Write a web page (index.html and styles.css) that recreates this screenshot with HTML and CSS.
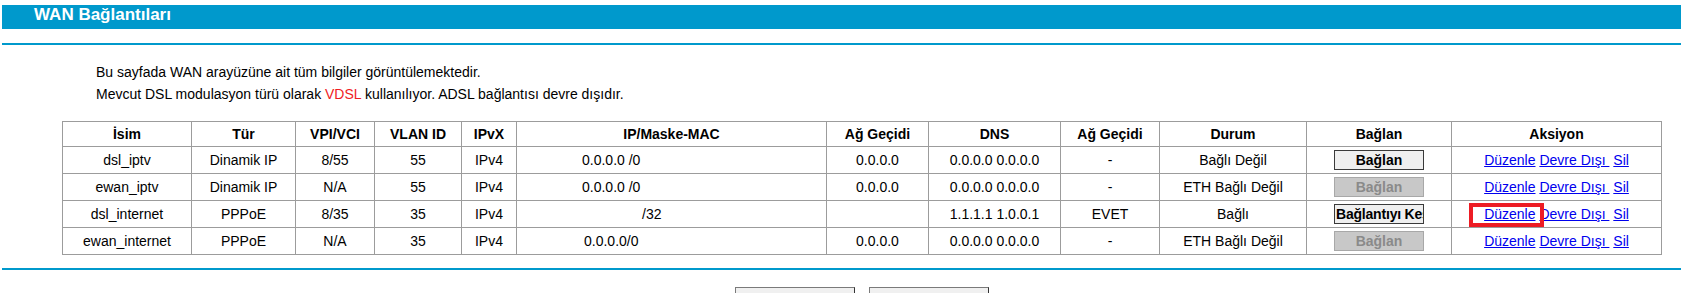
FILE: index.html
```html
<!DOCTYPE html>
<html lang="tr">
<head>
<meta charset="utf-8">
<title>WAN Bağlantıları</title>
<link rel="stylesheet" href="styles.css">
</head>
<body>
<div class="page">
  <div class="titlebar">WAN Bağlantıları</div>
  <div class="rule"></div>
  <div class="content">
    <div class="intro">
      <p>Bu sayfada WAN arayüzüne ait tüm bilgiler görüntülemektedir.</p>
      <p>Mevcut DSL modulasyon türü olarak <span class="red">VDSL</span> kullanılıyor. ADSL bağlantısı devre dışıdır.</p>
    </div>
    <table class="wan">
      <colgroup>
        <col class="c1"><col class="c2"><col class="c3"><col class="c4"><col class="c5"><col class="c6">
        <col class="c7"><col class="c8"><col class="c9"><col class="c10"><col class="c11"><col class="c12">
      </colgroup>
      <thead>
        <tr>
          <th>İsim</th><th>Tür</th><th>VPI/VCI</th><th>VLAN ID</th><th>IPvX</th><th>IP/Maske-MAC</th>
          <th>Ağ Geçidi</th><th>DNS</th><th>Ağ Geçidi</th><th>Durum</th><th>Bağlan</th><th>Aksiyon</th>
        </tr>
      </thead>
      <tbody>
        <tr>
          <td>dsl_iptv</td><td>Dinamik IP</td><td>8/55</td><td>55</td><td>IPv4</td><td class="ip">0.0.0.0 /0</td>
          <td>0.0.0.0</td><td>0.0.0.0 0.0.0.0</td><td>-</td><td>Bağlı Değil</td>
          <td><button class="conn" type="button">Bağlan</button></td>
          <td class="act"><a href="#">Düzenle</a> <a href="#">Devre Dışı&nbsp;</a> <a href="#">Sil</a></td>
        </tr>
        <tr>
          <td>ewan_iptv</td><td>Dinamik IP</td><td>N/A</td><td>55</td><td>IPv4</td><td class="ip">0.0.0.0 /0</td>
          <td>0.0.0.0</td><td>0.0.0.0 0.0.0.0</td><td>-</td><td>ETH Bağlı Değil</td>
          <td><button class="conn" type="button" disabled>Bağlan</button></td>
          <td class="act"><a href="#">Düzenle</a> <a href="#">Devre Dışı&nbsp;</a> <a href="#">Sil</a></td>
        </tr>
        <tr>
          <td>dsl_internet</td><td>PPPoE</td><td>8/35</td><td>35</td><td>IPv4</td><td class="ip ip-blank">/32</td>
          <td></td><td>1.1.1.1 1.0.0.1</td><td>EVET</td><td>Bağlı</td>
          <td><button class="conn wide" type="button">Bağlantıyı Kes</button></td>
          <td class="act"><span class="mark"><a href="#">Düzenle</a></span> <a href="#">Devre Dışı&nbsp;</a> <a href="#">Sil</a></td>
        </tr>
        <tr>
          <td>ewan_internet</td><td>PPPoE</td><td>N/A</td><td>35</td><td>IPv4</td><td class="ip ip-alt">0.0.0.0/0</td>
          <td>0.0.0.0</td><td>0.0.0.0 0.0.0.0</td><td>-</td><td>ETH Bağlı Değil</td>
          <td><button class="conn" type="button" disabled>Bağlan</button></td>
          <td class="act"><a href="#">Düzenle</a> <a href="#">Devre Dışı&nbsp;</a> <a href="#">Sil</a></td>
        </tr>
      </tbody>
    </table>
  </div>
  <div class="rule bottom"></div>
  <div class="actions">
    <button class="big" type="button"></button>
    <button class="big" type="button"></button>
  </div>
</div>
</body>
</html>
```
FILE: styles.css
```css
html, body {
  margin: 0;
  background: #fff;
}
body {
  font-family: "Liberation Sans", Arial, sans-serif;
  font-size: 14px;
  color: #000;
}
.page {
  padding: 5px 0 0 2px;
}
.titlebar {
  height: 24px;
  line-height: 20px;
  background: #0099cc;
  color: #fff;
  font-weight: bold;
  font-size: 17px;
  padding-left: 32px;
  box-sizing: border-box;
}
.rule {
  height: 2px;
  background: #0099cc;
  margin-top: 14px;
}
.content {
  padding-left: 60px;
}
.intro {
  padding: 16px 0 0 34px;
}
.intro p {
  margin: 0;
  line-height: 22px;
}
.red {
  color: #f01c24;
}
.wan {
  margin-top: 16px;
  border-collapse: collapse;
  table-layout: fixed;
  width: 1599px;
}
.c1 { width: 129px; }
.c2 { width: 104px; }
.c3 { width: 79px; }
.c4 { width: 87px; }
.c5 { width: 55px; }
.c6 { width: 310px; }
.c7 { width: 102px; }
.c8 { width: 132px; }
.c9 { width: 99px; }
.c10 { width: 147px; }
.c11 { width: 145px; }
.c12 { width: 210px; }
.wan th,
.wan td {
  border: 1px solid #9c9c9c;
  text-align: center;
  padding: 0;
  white-space: nowrap;
}
.wan th {
  height: 24px;
  font-weight: bold;
}
.wan td {
  height: 26px;
}
.wan td.ip {
  text-align: left;
  padding-left: 65px;
}
.wan td.ip-blank {
  padding-left: 125px;
}
.wan td.ip-alt {
  padding-left: 67px;
}
.conn {
  width: 90px;
  height: 20px;
  padding: 0 1px;
  margin: 0;
  box-sizing: border-box;
  font-family: "Liberation Sans", Arial, sans-serif;
  font-size: 14px;
  font-weight: bold;
  color: #000;
  background: #efefef;
  border: 1px solid #3a3a3a;
  border-radius: 0;
  overflow: hidden;
  white-space: nowrap;
  vertical-align: middle;
}
.conn:disabled {
  background: #c8c8c8;
  border-color: #a8a8a8;
  color: #8a8a8a;
}
.conn.wide {
  text-align: left;
  letter-spacing: -0.2px;
}
.act a {
  color: #0000ee;
  text-decoration: underline;
}
.mark {
  position: relative;
}
.mark::after {
  content: "";
  position: absolute;
  left: -15px;
  right: -8px;
  top: -3px;
  bottom: -5px;
  border: 4px solid #ed1c24;
}
.rule.bottom {
  margin-top: 13px;
}
.actions {
  width: 1599px;
  padding-left: 60px;
  margin-top: 17px;
  display: flex;
  justify-content: center;
  gap: 14px;
}
.big {
  width: 120px;
  height: 32px;
  margin: 0;
  padding: 0;
  background: #f0f0f0;
  border: 1px solid #7a7a7a;
  border-right-color: #333;
  border-bottom-color: #333;
  border-radius: 0;
}
```
